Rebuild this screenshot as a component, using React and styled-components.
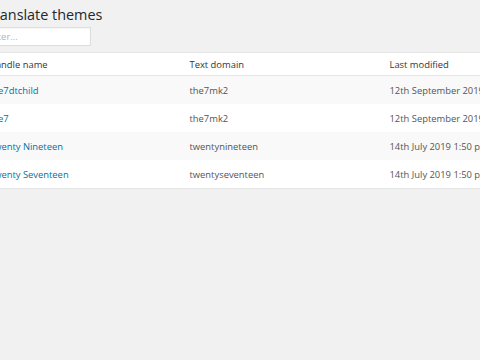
import React from 'react';
import styled, { createGlobalStyle } from "styled-components";

const GlobalStyle = createGlobalStyle`
    html, body {
        margin: 0;
        padding: 0;
        background-color: #f1f1f1;
        overflow: hidden;
    }
    body {
        font-family: "Open Sans", "Noto Sans", sans-serif;
        color: #444;
    }
`

const Wrap = styled.div`
    margin-left: -20px;
    width: 560px;
`

const Title = styled.h1`
    margin: 0;
    padding: 4px 0 0 6px;
    font-size: 14.4px;
    line-height: 21px;
    font-weight: 400;
    color: #23282d;
`

const Filter = styled.input`
    display: block;
    box-sizing: border-box;
    margin: 2px 0 6px 0;
    width: 111px;
    height: 19px;
    padding: 0 7px;
    border: 1px solid #ddd;
    background: #fff;
    font-family: inherit;
    font-size: 9.5px;
    box-shadow: inset 0 1px 2px rgba(0,0,0,0.04);
    outline: none;
    &::placeholder {
        color: #b4b4b4;
    }
`

const Table = styled.table`
    border-collapse: collapse;
    border-spacing: 0;
    width: 560px;
    background: #fff;
    border: 1px solid #e5e5e5;
    table-layout: fixed;
    font-size: 9.4px;
`

const Head = styled.th`
    box-sizing: border-box;
    text-align: left;
    font-weight: 400;
    color: #32373c;
    height: 23px;
    padding: 0 8px;
    border-bottom: 1px solid #e5e5e5;
    width: ${props => props.w};
    white-space: nowrap;
`

const Row = styled.tr`
    background-color: ${props => props.odd ? "#f9f9f9" : "#fff"};
`

const Cell = styled.td`
    height: 28px;
    padding: 0 8px;
    color: #555;
    white-space: nowrap;
`

const Link = styled.a`
    color: #0073aa;
    text-decoration: none;
`

const themes = [
    {name: "the7dtchild", domain: "the7mk2", modified: "12th September 2019 11:02 am"},
    {name: "the7", domain: "the7mk2", modified: "12th September 2019 11:02 am"},
    {name: "Twenty Nineteen", domain: "twentynineteen", modified: "14th July 2019 1:50 pm"},
    {name: "Twenty Seventeen", domain: "twentyseventeen", modified: "14th July 2019 1:50 pm"}
]

export default function App() {
    return (
        <Wrap>
            <GlobalStyle/>
            <Title>Translate themes</Title>
            <Filter placeholder="Filter..."/>
            <Table>
                <thead>
                    <tr>
                        <Head w="201px">Handle name</Head>
                        <Head w="200px">Text domain</Head>
                        <Head>Last modified</Head>
                    </tr>
                </thead>
                <tbody>
                    {themes.map((item, index) => (
                        <Row key={item.name} odd={index % 2 === 0}>
                            <Cell><Link href="#">{item.name}</Link></Cell>
                            <Cell>{item.domain}</Cell>
                            <Cell>{item.modified}</Cell>
                        </Row>
                    ))}
                </tbody>
            </Table>
        </Wrap>
    );
}
